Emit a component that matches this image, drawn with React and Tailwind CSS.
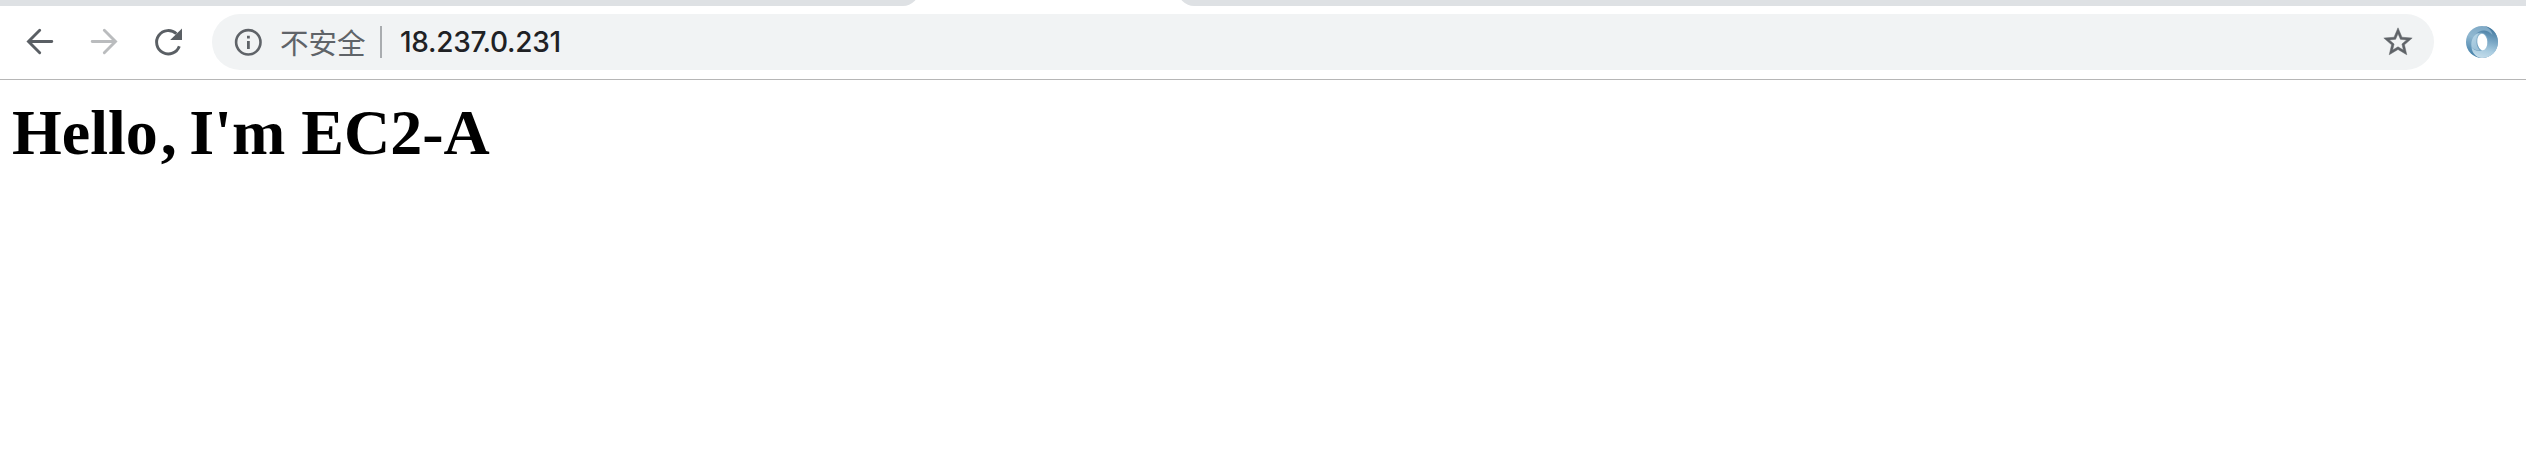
function TabStrip() {
  return (
    <div className="flex h-[6px] items-end justify-between overflow-hidden bg-white">
      <div className="h-[16px] w-[919px] shrink-0 rounded-br-[16px] bg-[#dee1e4]" />
      <div className="h-[16px] w-[1348px] shrink-0 rounded-bl-[16px] bg-[#dee1e4]" />
    </div>
  );
}

function BackIcon() {
  return (
    <svg className="block size-8" viewBox="0 0 32 32" fill="none" stroke="#5a5f64" strokeWidth="2.9" strokeLinecap="round">
      <path d="M27.8 15.500H5M15.700 4.300L4.500 15.500L15.700 26.700" />
    </svg>
  );
}

function ForwardIcon() {
  return (
    <svg className="block size-8" viewBox="0 0 32 32" fill="none" stroke="#babcbe" strokeWidth="2.9" strokeLinecap="round">
      <path d="M4.200 15.500H27M16.300 4.300L27.500 15.500L16.300 26.700" />
    </svg>
  );
}

function ReloadIcon() {
  return (
    <svg className="block size-8" viewBox="0 0 32 32">
      <path d="M27.300 20.200A11.700 11.700 0 1 1 24.400 7.800" fill="none" stroke="#5a5f64" strokeWidth="2.900" />
      <path d="M30 2.500V14H18.200Z" fill="#5a5f64" />
    </svg>
  );
}

function InfoIcon() {
  return (
    <svg className="block size-8 shrink-0" viewBox="0 0 32 32">
      <circle cx="16.300" cy="16.300" r="12.200" fill="none" stroke="#5f6368" strokeWidth="2.600" />
      <path d="M15 9.800h2.800v2.800h-2.800zM15 15h2.800v8h-2.800z" fill="#5f6368" />
    </svg>
  );
}

function StarIcon() {
  return (
    <svg className="block size-[34px]" viewBox="0 0 24 24" fill="#5f6368" stroke="#5f6368" strokeWidth="0.35">
      <path d="M22 9.24l-7.19-.62L12 2 9.19 8.63 2 9.24l5.46 4.73L5.82 21 12 17.27 18.18 21l-1.63-7.03L22 9.24zM12 15.4l-3.76 2.27 1-4.28-3.32-2.88 4.38-.38L12 6.1l1.71 4.04 4.38.38-3.32 2.88 1 4.28L12 15.4z" />
    </svg>
  );
}

function RingIcon() {
  return (
    <svg className="block size-8" viewBox="0 0 32 32">
      <defs>
        <linearGradient id="ring-left" x1="0.55" y1="0" x2="0.25" y2="1">
          <stop offset="0" stopColor="#7fa9c6" />
          <stop offset="0.4" stopColor="#8fb7d0" />
          <stop offset="0.7" stopColor="#6699bb" />
          <stop offset="1" stopColor="#3f7ca5" />
        </linearGradient>
        <linearGradient id="ring-right" x1="0.6" y1="0" x2="0.4" y2="1">
          <stop offset="0" stopColor="#3c739a" />
          <stop offset="0.45" stopColor="#7ba8c6" />
          <stop offset="0.75" stopColor="#a9cce0" />
          <stop offset="1" stopColor="#c3dcea" />
        </linearGradient>
        <linearGradient id="ring-inner" x1="0" y1="0" x2="0.5" y2="1">
          <stop offset="0" stopColor="#b8d7e9" />
          <stop offset="1" stopColor="#9cc1d8" />
        </linearGradient>
      </defs>
      <circle cx="16" cy="16" r="16" fill="url(#ring-left)" />
      <path d="M18 0.100C26 1 32 8 32 16C32 25 25 32 16 32C10 31.500 6 27 5.500 21C9 25.500 14 25.500 17 23.500C21 21 22.500 15 21 11C19 7 15 5.500 10 8C14 3.500 21 2.500 26.500 9C25.500 4 22 1 18 0.100Z" fill="url(#ring-right)" />
      <path d="M5.500 21C4.500 14 8 8 13 7.300C9 12 9.500 20 14 24.300C11 24.800 7.500 23.500 5.500 21Z" fill="url(#ring-inner)" />
      <ellipse cx="16.300" cy="16" rx="5" ry="8.300" fill="white" transform="rotate(-4 16 16)" />
    </svg>
  );
}

function AddressBar() {
  return (
    <div className="flex h-14 w-[2222px] items-center rounded-full bg-[#f1f3f4] pl-5 pr-[19px]">
      <InfoIcon />
      <span
        lang="zh-CN"
        className="ml-4 w-[84px] whitespace-nowrap pb-px font-['Noto_Sans_CJK_SC',sans-serif] text-[28.5px] leading-8 text-[#5f6368]"
      >
        不安全
      </span>
      <span className="ml-4 h-8 w-[2px] bg-[#a9acaf]" />
      <span className="ml-[18px] whitespace-nowrap font-['Inter','Liberation_Sans',sans-serif] text-[28px] font-medium leading-8 tracking-[-0.3px] text-[#202124]">
        18.237.0.231
      </span>
      <div className="ml-auto">
        <StarIcon />
      </div>
    </div>
  );
}

export default function App() {
  return (
    <div className="flex h-[464px] w-[2526px] flex-col overflow-hidden bg-white">
      <TabStrip />
      <div className="flex h-[74px] items-center border-b border-[#b6b6b6] pb-px pl-6 pr-7">
        <div className="flex w-[188px] gap-8">
          <BackIcon />
          <ForwardIcon />
          <ReloadIcon />
        </div>
        <AddressBar />
        <div className="ml-8">
          <RingIcon />
        </div>
      </div>
      <main className="px-3 pt-4">
        <h1 className="whitespace-nowrap font-['Liberation_Serif',serif] text-[64px] font-bold leading-[74px] text-black">
          Hell<span className="tracking-[3px]">o</span>
          <span className="tracking-[-3.5px]">,</span> I'm EC2-A
        </h1>
      </main>
    </div>
  );
}
